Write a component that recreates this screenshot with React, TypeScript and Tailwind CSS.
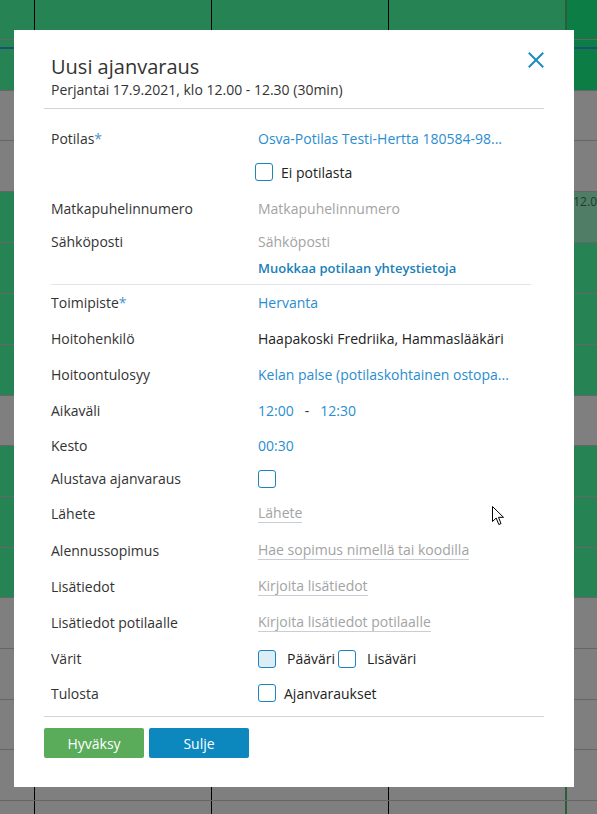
import React from "react";

type Row = { h: number; left: string; right: string; note?: string };

const GREEN = "bg-[#268454]";
const GREY = "bg-[#7f7f7f]";

const rows: Row[] = [
  { h: 40, left: GREEN, right: "bg-[#0b7d45]" },
  { h: 51, left: GREEN, right: "bg-[#0b7d45]" },
  { h: 50, left: GREY, right: GREY },
  { h: 51, left: GREY, right: GREY },
  { h: 51, left: GREEN, right: "bg-[#4f7d66]", note: "12.0" },
  { h: 51, left: GREEN, right: GREEN },
  { h: 51, left: GREEN, right: GREEN },
  { h: 51, left: GREEN, right: GREEN },
  { h: 50, left: GREY, right: GREY },
  { h: 51, left: GREEN, right: GREEN },
  { h: 51, left: GREEN, right: GREEN },
  { h: 50, left: GREEN, right: GREEN },
  { h: 51, left: GREY, right: GREY },
  { h: 51, left: GREY, right: GREY },
  { h: 50, left: GREY, right: GREY },
  { h: 51, left: GREY, right: GREY },
  { h: 51, left: GREY, right: GREY },
];

const Checkbox = ({ filled }: { filled?: boolean }) => (
  <span
    className={`inline-block w-[18px] h-[18px] rounded-[3px] border-[1.5px] border-[#1b84bd] shrink-0 ${
      filled ? "bg-[#dcedf6]" : "bg-white"
    }`}
  />
);

const FieldRow = ({
  label,
  h,
  children,
}: {
  label?: React.ReactNode;
  h: number;
  children?: React.ReactNode;
}) => (
  <div className="flex items-center pl-[7px]" style={{ height: h }}>
    <div className="w-[207px] shrink-0 text-[#333]">{label}</div>
    <div className="flex items-center min-w-0">{children}</div>
  </div>
);

const Underlined = ({ text }: { text: string }) => (
  <span className="text-[#a3a3a3] leading-[18px] border-b border-[#c9ced6]">
    {text}
  </span>
);

const Required = ({ text }: { text: string }) => (
  <>
    {text}
    <span className="text-[#4a93c9]">*</span>
  </>
);

const link = "text-[#2a8dcf]";

export default function App() {
  return (
    <div className="relative w-[597px] h-[814px] overflow-hidden font-['Open_Sans',sans-serif] text-[14px]">
      {/* calendar behind */}
      <div className="flex flex-col">
        {rows.map((r, i) => (
          <div
            key={i}
            className="flex border-b border-[#666] box-border"
            style={{ height: r.h }}
          >
            <div className={`w-[35px] border-r border-black ${r.left}`} />
            <div className={`w-[177px] border-r border-black ${r.left}`} />
            <div className={`w-[177px] border-r border-black ${r.left}`} />
            <div className={`w-[178px] border-r-2 border-[#2c5e3c] ${r.left}`} />
            <div className={`flex-1 pl-[8px] pt-[1px] text-[12px] text-[#1e3d2c] ${r.right}`}>
              {r.note}
            </div>
          </div>
        ))}
      </div>
      <div className="absolute left-0 right-0 top-[47px] h-[2px] bg-[#1b4f73]" />

      {/* dialog */}
      <div className="absolute left-[14px] top-[30px] w-[560px] h-[757px] bg-white px-[30px] pt-[24px]">
        <div className="relative pl-[7px]">
          <div className="text-[20px] leading-[26px] text-[#333]">
            Uusi ajanvaraus
          </div>
          <div className="text-[14px] leading-[20px] text-[#333]">
            Perjantai 17.9.2021, klo 12.00 - 12.30 (30min)
          </div>
          <svg
            className="absolute right-0 top-[-2px]"
            width="16"
            height="16"
            viewBox="0 0 16 16"
          >
            <path
              d="M1.5 1.5 L14.5 14.5 M14.5 1.5 L1.5 14.5"
              stroke="#1d8ac4"
              strokeWidth="2"
              strokeLinecap="square"
            />
          </svg>
        </div>
        <div className="mt-[8px] h-px bg-[#d4d4d4]" />

        <div className="pt-[11px]">
          <FieldRow h={36} label={<Required text="Potilas" />}>
            <span className={link}>Osva-Potilas Testi-Hertta 180584-98...</span>
          </FieldRow>
          <FieldRow h={32}>
            <span className="ml-[-3px] flex items-center gap-[8px] text-[#222]">
              <Checkbox />
              Ei potilasta
            </span>
          </FieldRow>
          <FieldRow h={40} label="Matkapuhelinnumero">
            <span className="text-[#a3a3a3]">Matkapuhelinnumero</span>
          </FieldRow>
          <FieldRow h={26} label="Sähköposti">
            <span className="text-[#a3a3a3]">Sähköposti</span>
          </FieldRow>
          <FieldRow h={30}>
            <span className="text-[13px] font-semibold text-[#1a80b8]">
              Muokkaa potilaan yhteystietoja
            </span>
          </FieldRow>
          <div className="ml-[7px] mr-[13px] h-px bg-[#e1e5ea]" />

          <FieldRow h={35} label={<Required text="Toimipiste" />}>
            <span className={link}>Hervanta</span>
          </FieldRow>
          <FieldRow h={36} label="Hoitohenkilö">
            <span className="text-[#222]">Haapakoski Fredriika, Hammaslääkäri</span>
          </FieldRow>
          <FieldRow h={36} label="Hoitoontulosyy">
            <span className={link}>Kelan palse (potilaskohtainen ostopa...</span>
          </FieldRow>
          <FieldRow h={36} label="Aikaväli">
            <span className={link}>12:00</span>
            <span className="mx-[11px] text-[#333]">-</span>
            <span className={link}>12:30</span>
          </FieldRow>
          <FieldRow h={34} label="Kesto">
            <span className={link}>00:30</span>
          </FieldRow>
          <FieldRow h={33} label="Alustava ajanvaraus">
            <Checkbox />
          </FieldRow>
          <FieldRow h={37} label="Lähete">
            <Underlined text="Lähete" />
          </FieldRow>
          <FieldRow h={36} label="Alennussopimus">
            <Underlined text="Hae sopimus nimellä tai koodilla" />
          </FieldRow>
          <FieldRow h={36} label="Lisätiedot">
            <Underlined text="Kirjoita lisätiedot" />
          </FieldRow>
          <FieldRow h={36} label="Lisätiedot potilaalle">
            <Underlined text="Kirjoita lisätiedot potilaalle" />
          </FieldRow>
          <FieldRow h={37} label="Värit">
            <Checkbox filled />
            <span className="ml-[11px] mr-[3px] text-[#222]">Pääväri</span>
            <Checkbox />
            <span className="ml-[11px] text-[#222]">Lisäväri</span>
          </FieldRow>
          <FieldRow h={32} label="Tulosta">
            <Checkbox />
            <span className="ml-[8px] text-[#222]">Ajanvaraukset</span>
          </FieldRow>
        </div>

        <div className="mt-[7px] h-px bg-[#d4d4d4]" />
        <div className="mt-[11px] flex gap-[5px]">
          <button className="w-[100px] h-[30px] rounded-[2px] bg-[#5aab5a] text-white">
            Hyväksy
          </button>
          <button className="w-[100px] h-[30px] rounded-[2px] bg-[#0d88bf] text-white">
            Sulje
          </button>
        </div>
      </div>

      {/* mouse pointer */}
      <svg
        className="absolute left-[492px] top-[506px]"
        width="14"
        height="20"
        viewBox="0 0 14 20"
      >
        <path
          d="M0.5 0.5 L0.5 15.5 L4.2 12 L6.8 18.5 L9 17.6 L6.5 11.3 L11.5 11.3 Z"
          fill="white"
          stroke="black"
          strokeWidth="1"
          strokeLinejoin="round"
        />
      </svg>
    </div>
  );
}
